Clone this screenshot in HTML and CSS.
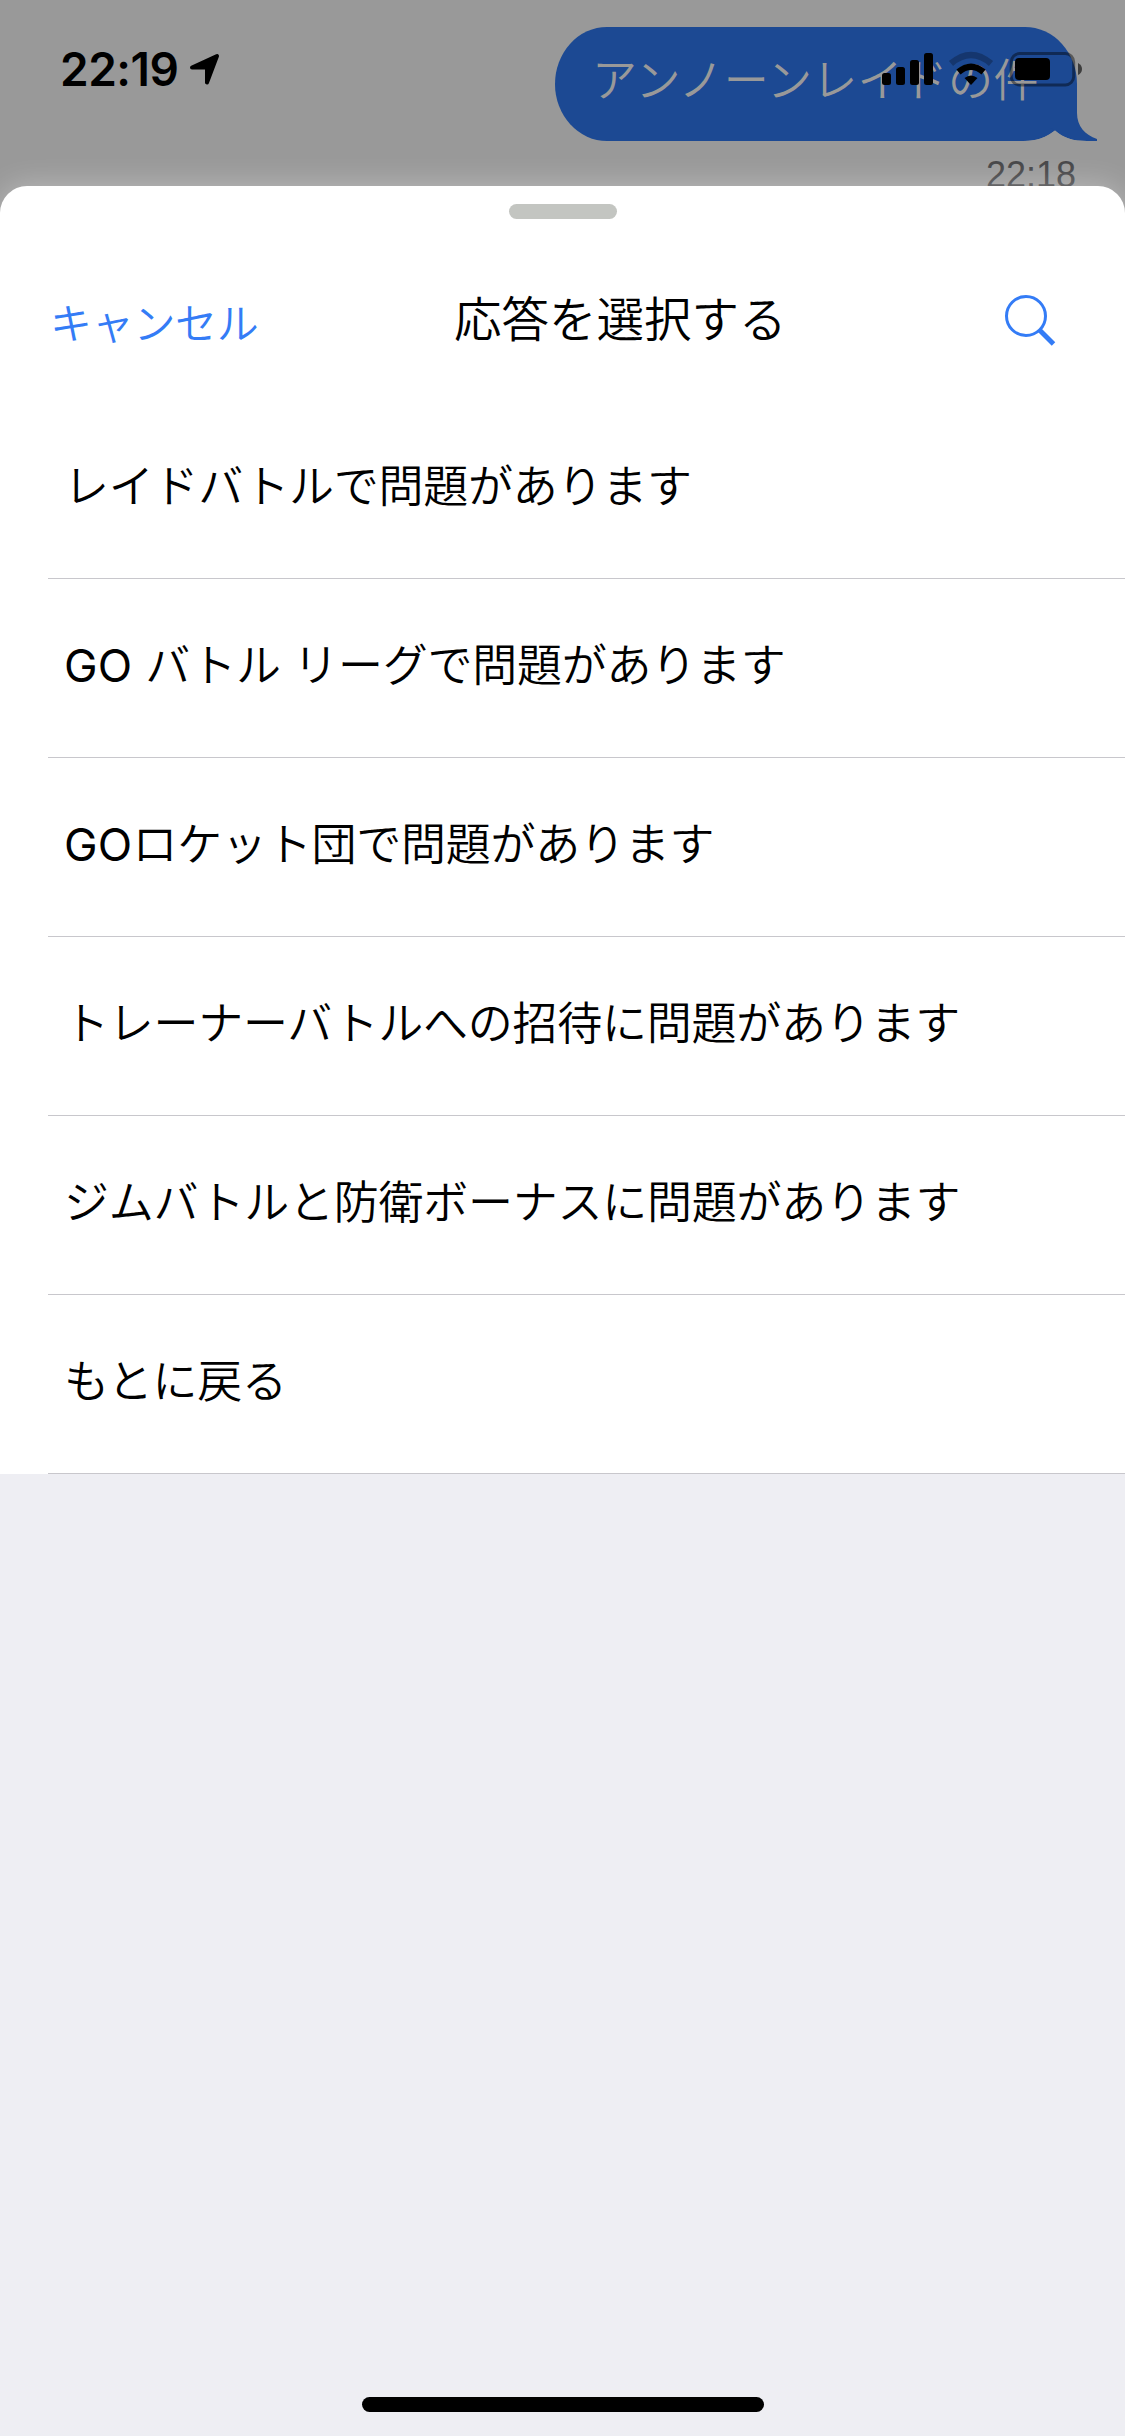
FILE: index.html
```html
<!DOCTYPE html>
<html lang="ja">
<head>
<meta charset="utf-8">
<title>応答を選択する</title>
<link rel="stylesheet" href="styles.css">
</head>
<body>
<div class="screen">
  <section class="chat">
    <div class="bubble">
      <span class="bubble-text">アンノーンレイドの件</span>
      <svg class="tail" width="80" height="57" viewBox="0 -17 80 57"><path d="M32 -17H60V12C60 25 68 34 80 38V40H70C56 40 46 37 38 29.500L32 26Z" fill="#1c4993"/><path d="M6 40C20 40 30 36 38 29.500C46 37 56 40 70 40Z" fill="#999"/></svg>
    </div>
    <time class="sent">22:18</time>
  </section>

  <header class="status">
    <span class="clock">22:19</span>
    <svg class="arrow" width="32" height="34" viewBox="0 0 32 34"><path d="M3 15.500L28 4L18 30.500V15.500Z" fill="#000" stroke="#000" stroke-width="4" stroke-linejoin="round"/></svg>
    <svg class="indicators" width="204" height="36" viewBox="0 0 204 36">
      <rect x="2" y="22" width="9" height="12" rx="2.500"/>
      <rect x="16" y="16" width="9" height="18" rx="2.500"/>
      <rect x="30" y="9" width="9" height="25" rx="2.500"/>
      <rect x="44" y="2" width="9" height="32" rx="2.500"/>
      <g fill="none" stroke="#000">
        <path d="M71 12.500Q91 -4.500 111 12.500" stroke-width="6.500" opacity=".25"/>
        <path d="M78.500 21Q91 10.500 103.500 21" stroke-width="6.500"/>
      </g>
      <path d="M84.500 27Q91 22 97.500 27L91 34Z"/>
      <rect x="131.200" y="2.500" width="62.500" height="31.500" rx="8.500" fill="none" stroke="#000" stroke-width="3" opacity=".42"/>
      <rect x="135" y="7" width="35" height="22" rx="4"/>
      <path d="M198 12Q202 14 202 18T198 24Z" opacity=".6"/>
    </svg>
  </header>

  <main class="sheet">
    <div class="grabber"></div>
    <nav class="toolbar">
      <a class="cancel">キャンセル</a>
      <h1 class="title">応答を選択する</h1>
      <svg class="search" width="54" height="54" viewBox="0 0 54 54" fill="none" stroke="#347cf6"><circle cx="22" cy="22" r="19.500" stroke-width="3"/><path d="M35.500 36L49.500 50" stroke-width="5"/></svg>
    </nav>
    <ul class="options">
      <li class="option">レイドバトルで問題があります</li>
      <li class="option"><span class="latin">GO </span>バトル リーグで問題があります</li>
      <li class="option"><span class="latin">GO</span>ロケット団で問題があります</li>
      <li class="option">トレーナーバトルへの招待に問題があります</li>
      <li class="option">ジムバトルと防衛ボーナスに問題があります</li>
      <li class="option">もとに戻る</li>
    </ul>
    <footer class="rest"><div class="home"></div></footer>
  </main>
</div>
</body>
</html>
```
FILE: styles.css
```css
* { box-sizing: border-box; }
body {
  margin: 0;
  font-family: Inter, "Noto Sans CJK JP", sans-serif;
  font-weight: 350;
  color: #000;
}
.screen {
  position: relative;
  display: flex;
  flex-direction: column;
  height: 2436px;
  overflow: hidden;
  background: #999;
}
.chat {
  display: flex;
  flex-direction: column;
  align-items: flex-end;
  flex: none;
  height: 186px;
  padding: 27px 48px 0 0;
}
.bubble {
  position: relative;
  flex: none;
  width: 522px;
  height: 114px;
  padding: 26px 0 0 37px;
  border-radius: 52px / 57px;
  background: #1c4993;
  color: #999;
  white-space: nowrap;
}
.bubble-text {
  position: relative;
  z-index: 1;
  display: block;
  font-size: 45px;
  line-height: 56px;
  letter-spacing: .3px;
}
.tail {
  position: absolute;
  right: -20px;
  bottom: 0;
}
.sent {
  flex: none;
  margin: 12px 1px 0 0;
  font: 400 36px/44px "Liberation Sans", sans-serif;
  color: #464648;
}
.status {
  position: absolute;
  inset: 0 0 auto 0;
  display: flex;
  align-items: flex-start;
  padding: 51px 41px 0 60px;
  z-index: 2;
}
.clock {
  width: 129px;
  font-size: 46px;
  font-weight: 600;
  line-height: 37px;
  letter-spacing: -.5px;
}
.arrow { margin-top: 1px; }
.indicators { margin-left: auto; }
.sheet {
  position: relative;
  display: flex;
  flex-direction: column;
  flex: 1;
  border-radius: 27px 27px 0 0;
  background: #fff;
  box-shadow: 0 0 30px rgba(255, 255, 255, .35);
}
.grabber {
  width: 108px;
  height: 15px;
  margin: 18px auto 0;
  border-radius: 7.5px;
  background: #c3c5c1;
}
.toolbar {
  display: grid;
  grid-template-columns: 404px 1fr auto;
  align-items: center;
  height: 181px;
  padding: 14px 67px 0 50px;
}
.cancel {
  padding-top: 7px;
  font-size: 42px;
  letter-spacing: -.3px;
  color: #347cf6;
}
.title {
  margin: 0;
  padding-top: 6px;
  font-size: 47.5px;
  font-weight: 350;
  line-height: 70px;
}
.search { margin-top: 8px; }
.options {
  margin: 0;
  padding: 0 0 0 48px;
  list-style: none;
}
.option {
  height: 179px;
  padding: 4px 0 0 16px;
  border-bottom: 1px solid #c8c7cc;
  font-size: 45px;
  line-height: 166px;
  letter-spacing: -.25px;
  white-space: nowrap;
}
.latin {
  font-weight: 400;
  letter-spacing: .2px;
}
.rest {
  display: flex;
  flex: 1;
  align-items: flex-end;
  justify-content: center;
  padding-bottom: 24px;
  background: #eeeef3;
}
.home {
  width: 402px;
  height: 15px;
  border-radius: 7.5px;
  background: #000;
}
```
